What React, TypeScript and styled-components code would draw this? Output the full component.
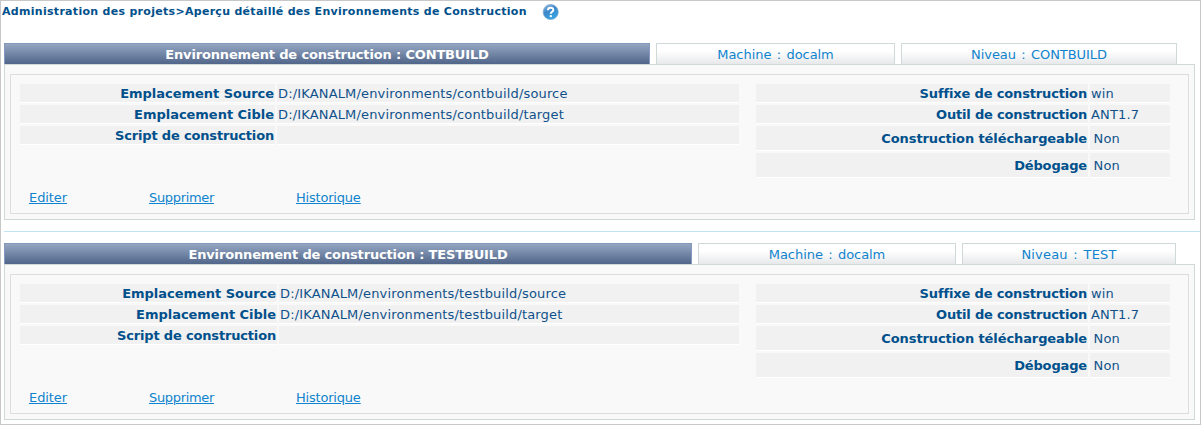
import React from 'react';
import styled, { createGlobalStyle } from 'styled-components';

const GlobalStyle = createGlobalStyle`
  * { box-sizing: border-box; }
  body { margin: 0; background: #fff; font: 13px/16px Verdana, "DejaVu Sans", sans-serif; color: #10518b; }
`;

const Page = styled.main`
  width: 1201px;
  height: 425px;
  border: 1px solid #c8c8c8;
  padding-left: 3px;
  overflow: hidden;
`;
const TitleBar = styled.header`
  height: 42px;
  margin-left: -2px;
  display: flex;
  align-items: flex-start;
  gap: 15px;
`;
const Title = styled.h1`
  margin: 3px 0 0;
  font-size: 11px;
  line-height: 16px;
  font-weight: bold;
  letter-spacing: 0.295px;
  color: #00508c;
  white-space: nowrap;
`;
const HelpIcon = styled.svg`
  display: block;
  margin-top: 3px;
`;
const Tabs = styled.div`
  display: flex;
  gap: 6px;
  height: 21px;
`;
const Tab = styled.div<{ $width: number; $active?: boolean }>`
  width: ${p => p.$width}px;
  height: 21px;
  border: 1px solid ${p => (p.$active ? '#8598bd' : '#d0d9d9')};
  border-bottom: 0;
  background: ${p => (p.$active ? 'linear-gradient(#94a6c2, #506589)' : 'linear-gradient(#fff 35%, #e7e8ea)')};
  color: ${p => (p.$active ? '#fff' : '#0f83cd')};
  font-weight: ${p => (p.$active ? 'bold' : 'normal')};
  line-height: 22px;
  text-align: center;
  white-space: nowrap;
`;
const Panel = styled.div`
  width: 1191px;
  height: 156px;
  padding: 9px 5px 5px;
  border: 1px solid #d0d9d9;
  background: #f9f9f9;
`;
const Content = styled.div`
  height: 140px;
  width: 1179px;
  border: 1px solid #dcdedd;
  padding: 9px 9px 0;
`;
const Details = styled.div`
  display: flex;
  gap: 17px;
  height: 106px;
`;
const Grid = styled.dl<{ $label: number; $value: number }>`
  margin: 0;
  display: grid;
  grid-template-columns: ${p => p.$label}px ${p => p.$value}px;
  grid-auto-rows: max-content;
  gap: 2px;
`;
const Term = styled.dt<{ $tall?: boolean; $spacing: number }>`
  height: ${p => (p.$tall ? 25 : 19)}px;
  line-height: ${p => (p.$tall ? 25 : 19)}px;
  border-bottom: 1px solid #fff;
  background: #f1f1f1;
  padding-right: 1px;
  text-align: right;
  font-weight: bold;
  letter-spacing: ${p => p.$spacing}px;
  color: #00508c;
  white-space: nowrap;
`;
const Value = styled.dd<{ $tall?: boolean }>`
  margin: 0;
  height: ${p => (p.$tall ? 25 : 19)}px;
  line-height: ${p => (p.$tall ? 25 : 19)}px;
  border-bottom: 1px solid #fff;
  background: #f1f1f1;
  padding-left: ${p => (p.$tall ? 3.5 : 1)}px;
  letter-spacing: 0.16px;
  white-space: nowrap;
`;
const Actions = styled.nav`
  display: grid;
  grid-template-columns: 120px 147px auto;
  padding-left: 9px;
`;
const Action = styled.a<{ $spacing: number }>`
  color: #0f83cd;
  text-decoration: underline;
  justify-self: start;
  letter-spacing: ${p => p.$spacing}px;
`;
const Separator = styled.hr`
  height: 1px;
  border: 0;
  margin: 11px 0;
  background: #bfe3f5;
`;
const Spaced = styled.span<{ $spacing: number; $word?: number }>`
  letter-spacing: ${p => p.$spacing}px;
  word-spacing: ${p => p.$word ?? 0}px;
`;

interface EnvironmentProps {
  name: string;
  level: string;
  folder: string;
  tabWidths: [number, number, number];
  labelWidth: number;
  levelSpacing: number;
}

function Environment({ name, level, folder, tabWidths, labelWidth, levelSpacing }: EnvironmentProps) {
  return (
    <section>
      <Tabs>
        <Tab $active $width={tabWidths[0]}><Spaced $spacing={-0.155}>Environnement de construction : {name}</Spaced></Tab>
        <Tab $width={tabWidths[1]}><Spaced $spacing={-0.05} $word={1.3}>Machine : docalm</Spaced></Tab>
        <Tab $width={tabWidths[2]}><Spaced $spacing={levelSpacing} $word={1.3}>Niveau : {level}</Spaced></Tab>
      </Tabs>
      <Panel>
        <Content>
          <Details>
            <Grid $label={labelWidth} $value={717 - labelWidth}>
              <Term $spacing={-0.03}>Emplacement Source</Term><Value>D:/IKANALM/environments/{folder}/source</Value>
              <Term $spacing={-0.03}>Emplacement Cible</Term><Value>D:/IKANALM/environments/{folder}/target</Value>
              <Term $spacing={-0.17}>Script de construction</Term><Value />
            </Grid>
            <Grid $label={332} $value={80}>
              <Term $spacing={-0.15}>Suffixe de construction</Term><Value>win</Value>
              <Term $spacing={-0.18}>Outil de construction</Term><Value>ANT1.7</Value>
              <Term $tall $spacing={-0.1}>Construction téléchargeable</Term><Value $tall>Non</Value>
              <Term $tall $spacing={-0.15}>Débogage</Term><Value $tall>Non</Value>
            </Grid>
          </Details>
          <Actions>
            <Action $spacing={-0.08}>Editer</Action>
            <Action $spacing={-0.33}>Supprimer</Action>
            <Action $spacing={-0.2}>Historique</Action>
          </Actions>
        </Content>
      </Panel>
    </section>
  );
}

export default function App() {
  return (
    <>
      <GlobalStyle />
      <Page>
        <TitleBar>
          <Title>Administration des projets&gt;Aperçu détaillé des Environnements de Construction</Title>
          <HelpIcon width="17" height="17" viewBox="0 0 17 17">
            <defs>
              <linearGradient id="ball" x1="0" y1="0" x2="0.5" y2="1">
                <stop offset="0" stopColor="#9cbfe0" />
                <stop offset="0.5" stopColor="#3b88c9" />
                <stop offset="1" stopColor="#35a5e4" />
              </linearGradient>
            </defs>
            <circle cx="8.7" cy="8" r="7.6" fill="url(#ball)" stroke="#7a9fc4" strokeWidth="0.6" />
            <path d="M6 6.2C6.1 2.9 11.5 3 11.3 6.1C11.2 7.8 8.8 7.8 8.8 9.8" fill="none" stroke="#fff" strokeWidth="2" />
            <circle cx="8.8" cy="12.1" r="1.2" fill="#fff" />
          </HelpIcon>
        </TitleBar>
        <Environment name="CONTBUILD" level="CONTBUILD" folder="contbuild" tabWidths={[646, 239, 276]} labelWidth={255} levelSpacing={-0.06} />
        <Separator />
        <Environment name="TESTBUILD" level="TEST" folder="testbuild" tabWidths={[688, 258, 214]} labelWidth={257} levelSpacing={0.18} />
      </Page>
    </>
  );
}
